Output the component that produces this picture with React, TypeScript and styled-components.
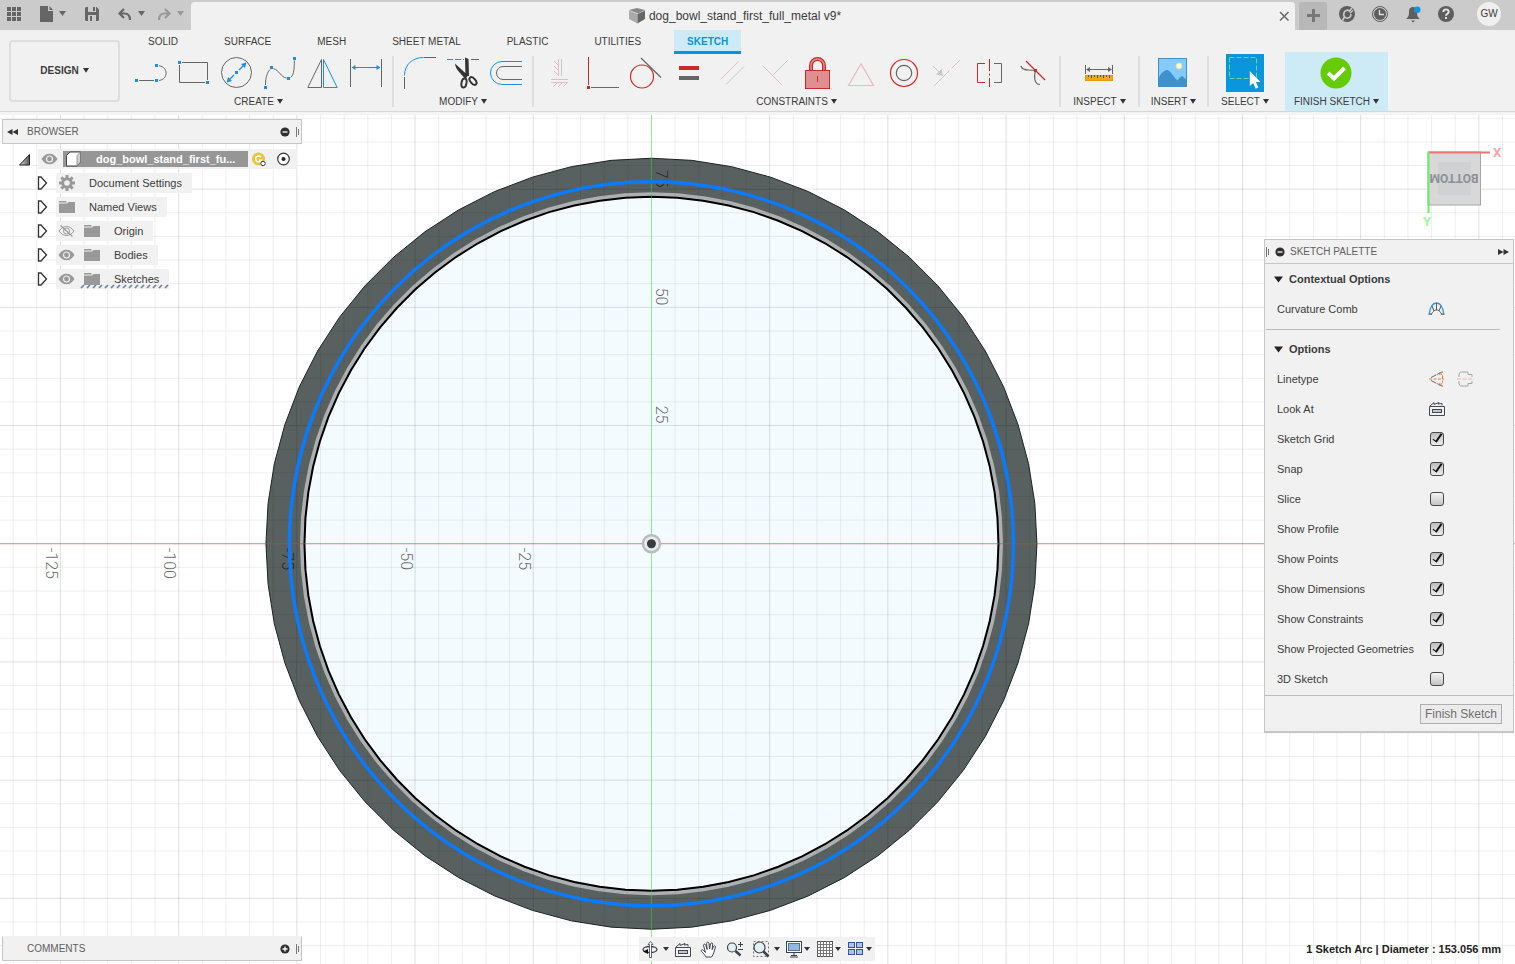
import React, { ReactNode } from "react";
import styled, { createGlobalStyle, css } from "styled-components";

const GlobalStyle = createGlobalStyle`
  *, *::before, *::after { box-sizing: border-box; }
  body {
    margin: 0;
    background: #fff;
    color: #3c3c3c;
    font: 11px/16px "Liberation Sans", Arial, sans-serif;
  }
  button { font: inherit; color: inherit; background: none; border: 0; padding: 0; margin: 0; cursor: pointer; }
  svg { display: block; flex: none; }
  ul { list-style: none; margin: 0; padding: 0; }
  h1, h2, h3 { margin: 0; font: inherit; }
`;

const capsFont = `10px/16px "Liberation Sans", Arial, sans-serif`;
const BLUE = "#1a8fe3";
const GRAY = "#666";
const RED = "#cc2a2a";
const PINK = "#e8bcbc";
const PALE = "#c8c8c8";
const panelBg = "#f1f1f1";

/* ---------- shared drawing helpers ---------- */

type ArtProps = { x: number; y: number; w: number; h: number; children: ReactNode };
const Art = ({ x, y, w, h, children }: ArtProps) => (
  <svg width={w} height={h} viewBox={`${x} ${y} ${w} ${h}`} fill="none" aria-hidden="true">
    {children}
  </svg>
);

const Caret = ({ color = "#333" }: { color?: string }) => (
  <svg width="6" height="6" viewBox="0 0 6 6" aria-hidden="true">
    <path d="M0 0h6L3 4.800z" fill={color} />
  </svg>
);

const Node = ({ x, y, c = BLUE }: { x: number; y: number; c?: string }) => (
  <rect x={x - 1.5} y={y - 1.5} width="3" height="3" fill={c} />
);

/* ---------- title bar ---------- */

const Page = styled.div`
  display: flex;
  flex-direction: column;
  min-height: 100vh;
`;

const TitleBar = styled.header`
  display: flex;
  height: 30px;
  background: #cbcbcb;
`;

const QuickBar = styled.div`
  display: flex;
  gap: 6px;
`;

const DocumentTab = styled.div`
  flex: 1;
  display: flex;
  align-items: center;
  margin-top: 2px;
  padding: 0 2px 0 4px;
  background: ${panelBg};
  border-radius: 4px 4px 0 0;
`;

const DocumentTitle = styled.h1`
  flex: 1;
  display: flex;
  align-items: center;
  justify-content: center;
  gap: 4px;
  font-size: 12px;
`;

const AddTab = styled.button`
  margin: 2px 4px 0 4px;
  background: #b8b8b8;
  border-radius: 3px 3px 0 0;
`;

const Avatar = styled.button`
  display: grid;
  place-items: center;
  width: 24px;
  height: 24px;
  margin: 2px 14px;
  border-radius: 50%;
  background: #efefef;
  font: ${capsFont};
`;

/* ---------- ribbon ---------- */

const Ribbon = styled.div`
  display: flex;
  background: ${panelBg};
  border-bottom: 3px solid #f4f4f4;
`;

const RibbonInner = styled.div`
  flex: 1;
  display: flex;
  border-bottom: 1px solid #d6d6d6;
`;

const Workspace = styled.button`
  display: flex;
  align-items: center;
  justify-content: center;
  gap: 4px;
  width: 111px;
  margin: 10px 5px 9px 9px;
  border: 2px solid #dedede;
  border-radius: 4px;
  font: bold ${capsFont};
`;

const RibbonBody = styled.div`
  flex: 1;
`;

const Tabs = styled.nav`
  display: flex;
  gap: 20px;
  height: 22px;
  padding-left: 10px;
`;

const Tab = styled.button<{ $active?: boolean }>`
  height: 24px;
  padding: 0 13px 1px;
  font: ${capsFont};
  ${(p) =>
    p.$active &&
    css`
      padding: 2px 13px 0;
      background: #cdeaf7;
      border-bottom: 3px solid #0696d7;
      color: #0696d7;
      font-weight: bold;
    `}
`;

const Tools = styled.div`
  display: flex;
`;

const Divider = styled.span`
  width: 2px;
  margin: 4px 0;
  background: #dedede;
`;

const Group = styled.section<{ $width?: number; $accent?: boolean }>`
  width: ${(p) => (p.$width ? `${p.$width}px` : "auto")};
  padding: ${(p) => (p.$width ? "1px 0 0" : "1px 8px 0")};
  background: ${(p) => (p.$accent ? "#cdeaf7" : "none")};
  margin-left: ${(p) => (p.$accent ? "4px" : "0")};
`;

const IconRow = styled.div`
  display: flex;
  align-items: center;
  justify-content: center;
  gap: 7px;
  height: 40px;
`;

const GroupLabel = styled.button`
  display: flex;
  align-items: center;
  justify-content: center;
  gap: 3px;
  width: 100%;
  height: 18px;
  font: ${capsFont};
`;

type Tool = { name: string; x: number; art: ReactNode; w?: number; y?: number; h?: number };

const createTools: Tool[] = [
  {
    name: "Line",
    x: 133,
    art: (
      <>
        <path d="M139 80.5h15M159 65.7c9.500 1.500 9.500 13.500 0 14.800" stroke={GRAY} />
        <Node x={136.5} y={80.5} /><Node x={156.5} y={80.5} /><Node x={156.5} y={65.5} />
      </>
    ),
  },
  {
    name: "Rectangle",
    x: 176,
    art: (
      <>
        <path d="M182 62.5h25.500V80M205 82.5h-25.500V65" stroke={GRAY} />
        <Node x={179.5} y={62.5} /><Node x={207.5} y={82.5} />
      </>
    ),
  },
  {
    name: "Circle",
    x: 219,
    art: (
      <>
        <circle cx="236.500" cy="72.500" r="15" stroke={GRAY} />
        <path d="M239 70l5-5M234 75l-5 5" stroke={BLUE} strokeWidth="1.300" />
        <path d="M246.500 62.500l-1.500 5.500-4-4zM226.500 82.500l1.500-5.500 4 4z" fill={BLUE} />
        <Node x={236.5} y={72.5} />
      </>
    ),
  },
  {
    name: "Spline",
    x: 262,
    art: (
      <>
        <path d="M265.500 85c0-8 2-13 4.500-15.500M273.500 68.500c6 2 7 8.500 13 9.500M290.500 77.500c4-3 3.500-10 4-17" stroke={GRAY} />
        <Node x={265.5} y={87.5} /><Node x={271.5} y={67.5} /><Node x={288.5} y={78.5} /><Node x={294.5} y={58.5} />
      </>
    ),
  },
  {
    name: "Mirror",
    x: 305,
    art: (
      <>
        <path d="M307.800 87.500h13.700V59.500z" stroke={GRAY} />
        <path d="M337.200 87.500h-13.700V59.500z" stroke={BLUE} />
      </>
    ),
  },
  {
    name: "Sketch Dimension",
    x: 348,
    art: (
      <>
        <path d="M350.500 59v28M381.500 59v28" stroke={GRAY} />
        <path d="M352 67.500h28" stroke={BLUE} />
        <path d="M351.500 67.500l4-2.500v5zM380.500 67.500l-4-2.500v5z" fill={BLUE} />
      </>
    ),
  },
];

const modifyTools: Tool[] = [
  {
    name: "Fillet",
    x: 402,
    art: (
      <>
        <path d="M404.500 75.500c0-11 8-18 19-18" stroke={BLUE} />
        <path d="M424 57.500h12M404.500 77v12" stroke={GRAY} />
      </>
    ),
  },
  {
    name: "Trim",
    x: 445,
    art: (
      <>
        <path d="M447 59.500h17" stroke={BLUE} strokeDasharray="6 2" />
        <path d="M471 59.500h8" stroke={GRAY} />
        <path d="M465 57.500l3.500 1.500.5 17h-3.500zM455 63.500l13 12-2.500 3.500c-4-5-10-9-10.500-15.500z" fill="#333" />
        <ellipse cx="464" cy="83" rx="2.500" ry="4.500" transform="rotate(10 464 83)" stroke="#333" strokeWidth="2" />
        <ellipse cx="473" cy="81" rx="2.500" ry="4.500" transform="rotate(-40 473 81)" stroke="#333" strokeWidth="2" />
      </>
    ),
  },
  {
    name: "Offset",
    x: 488,
    art: (
      <>
        <path d="M522 61.500h-20a11.500 11.500 0 0 0 0 23h20" stroke={BLUE} />
        <path d="M522 66.500h-19a6.500 6.500 0 0 0 0 13h19" stroke={GRAY} />
      </>
    ),
  },
];

const constraintTools: Tool[] = [
  {
    name: "Horizontal/Vertical",
    x: 542,
    art: (
      <>
        <path d="M561.500 59v17M551 79.500h17" stroke={PALE} />
        <path d="M558.500 59v17M558 65l-4-4M558 70l-4-4M558 75l-4-4M551 82.500h17M557 83l-4 4M562 83l-4 4M567 83l-4 4" stroke={PINK} />
      </>
    ),
  },
  {
    name: "Coincident",
    x: 585,
    art: (
      <>
        <path d="M588.500 57v28" stroke={RED} />
        <path d="M591 87.500h28" stroke={GRAY} />
        <Node x={588.5} y={87.5} c={RED} />
      </>
    ),
  },
  {
    name: "Tangent",
    x: 628,
    art: (
      <>
        <circle cx="642" cy="76.500" r="11.500" stroke={RED} strokeWidth="1.200" />
        <path d="M641 58l20 19.500" stroke={GRAY} strokeWidth="1.200" />
      </>
    ),
  },
  {
    name: "Equal",
    x: 671,
    art: (
      <>
        <path d="M679 66h20v4h-20z" fill={RED} />
        <path d="M679 76h20v4h-20z" fill={GRAY} />
      </>
    ),
  },
  {
    name: "Parallel",
    x: 714,
    art: (
      <>
        <path d="M720.500 79.500l18-18" stroke={PINK} />
        <path d="M726 84.500l18-18" stroke={PALE} />
      </>
    ),
  },
  {
    name: "Perpendicular",
    x: 757,
    art: (
      <>
        <path d="M762.500 65.500l20 20" stroke={PINK} />
        <path d="M773 75l14.500-14.500" stroke={PALE} />
      </>
    ),
  },
  {
    name: "Fix/Unfix",
    x: 800,
    art: (
      <>
        <path d="M811 70v-4.500a6.500 6.500 0 0 1 13 0V70" stroke={RED} strokeWidth="4" />
        <path d="M811 70v-4.500a6.500 6.500 0 0 1 13 0V70" stroke="#df8c8c" strokeWidth="1.500" />
        <rect x="805.500" y="70.500" width="24" height="18" fill="#df8f8f" stroke={RED} />
        <path d="M817.500 76v6" stroke={RED} />
      </>
    ),
  },
  {
    name: "Midpoint",
    x: 843,
    art: <path d="M861 63.800l-12.500 21.700h25z" stroke={PINK} strokeWidth="1.200" />,
  },
  {
    name: "Concentric",
    x: 886,
    art: (
      <>
        <circle cx="904" cy="73" r="13.500" stroke={RED} strokeWidth="1.200" />
        <circle cx="904" cy="73" r="7.700" stroke={GRAY} strokeWidth="1.200" />
      </>
    ),
  },
  {
    name: "Collinear",
    x: 929,
    art: (
      <>
        <path d="M934 86l15.500-15.500M933 66l6 6" stroke={PALE} />
        <path d="M951.500 68.500l8.500-8.500" stroke={PINK} />
        <path d="M943 76l-1.500-7-5.500 5.500z" fill={PALE} />
      </>
    ),
  },
  {
    name: "Symmetry",
    x: 972,
    art: (
      <>
        <path d="M985 63.500h-7.500v19h7.500" stroke={RED} />
        <path d="M989.500 59v12M989.500 73.500v2M989.500 78v9" stroke={RED} />
        <path d="M994 63.500h7.500v19h-7.500" stroke={GRAY} />
      </>
    ),
  },
  {
    name: "Curvature",
    x: 1015,
    art: (
      <>
        <path d="M1020.800 66c1.200 3.500 3.700 4 8 4l6.700.5c-2 7-1 14 4.500 14" stroke={GRAY} strokeWidth="1.200" />
        <path d="M1026 61l19 19" stroke={RED} strokeWidth="1.200" />
        <Node x={1035.5} y={70.5} c={RED} />
      </>
    ),
  },
];

const inspectTools: Tool[] = [
  {
    name: "Measure",
    x: 1082,
    w: 35,
    art: (
      <>
        <path d="M1085.500 65v9M1112.500 65v9M1087 69.500h24" stroke={GRAY} />
        <path d="M1086 69.500l4-2.500v5zM1112 69.500l-4-2.500v5z" fill={GRAY} />
        <rect x="1085.500" y="75.500" width="27" height="5" fill="#f5a80b" stroke="#e59a00" />
        <path d="M1088.500 75v2M1091.500 75v3M1094.500 75v2M1097.500 75v3M1100.500 75v2M1103.500 75v3M1106.500 75v2M1109.500 75v3" stroke="#555" />
      </>
    ),
  },
];

const insertTools: Tool[] = [
  {
    name: "Insert image",
    x: 1158,
    w: 31,
    art: (
      <>
        <rect x="1158.500" y="58.500" width="28" height="28" fill="#84caff" stroke="#3a94d3" />
        <path d="M1159 77c3-5 6-7 8.500-7s7.500 9 10 10.500c2-3 4-5 5.500-4l3 3V87h-27z" fill="#3e92cc" />
        <circle cx="1179" cy="66" r="3" fill="#fdfad0" stroke="#d9dfae" />
      </>
    ),
  },
];

const selectTools: Tool[] = [
  {
    name: "Select",
    x: 1226,
    y: 54,
    w: 38,
    h: 38,
    art: (
      <>
        <rect x="1226" y="54" width="38" height="38" fill="#0a96dc" />
        <rect x="1229.500" y="57.500" width="27" height="21" stroke="#63d98b" strokeDasharray="5 2" />
        <path d="M1249.800 71v15l3.400-3 2.500 5.700 2.700-1.200-2.500-5.500h4.600z" fill="#fff" />
      </>
    ),
  },
];

const finishTools: Tool[] = [
  {
    name: "Finish",
    x: 1319,
    w: 35,
    art: (
      <>
        <circle cx="1336" cy="73" r="15.500" fill="#65cb05" />
        <path d="M1328 73l6 5.500 10.500-10.500" stroke="#fff" strokeWidth="4" />
      </>
    ),
  },
];

const ToolGroup = ({ label, tools, width, accent }: { label: string; tools: Tool[]; width?: number; accent?: boolean }) => (
  <Group $width={width} $accent={accent}>
    <IconRow>
      {tools.map((t) => (
        <button key={t.name} title={t.name} aria-label={t.name}>
          <Art x={t.x} y={t.y ?? 55} w={t.w ?? 36} h={t.h ?? 36}>{t.art}</Art>
        </button>
      ))}
    </IconRow>
    <GroupLabel>{label}<Caret /></GroupLabel>
  </Group>
);

/* ---------- model canvas ---------- */

const Canvas = styled.main`
  position: relative;
  flex: 1;
  display: flex;
  flex-direction: column;
  justify-content: space-between;
  padding: 4px 1px 3px 2px;
`;

const Scene = styled.svg`
  position: absolute;
  inset: 0;
  width: 100%;
  height: 100%;
`;

const polygon = (radius: number, sides: number) =>
  Array.from({ length: sides }, (_, i) => {
    const a = (i * 2 * Math.PI) / sides;
    return `${(radius * Math.cos(a)).toFixed(1)},${(radius * Math.sin(a)).toFixed(1)}`;
  }).join(" ");

const STEP = 23.64;
const gridLines = Array.from({ length: 121 }, (_, i) => i - 60).filter((n) => n !== 0);

const ScaleLabel = ({ x, y, children }: { x: number; y: number; children: string }) => (
  <text transform={`translate(${x} ${y}) rotate(90)`} fontFamily="Roboto, sans-serif" fontWeight="300" fontSize="16" fill="#000" fillOpacity="0.6">
    {children}
  </text>
);

const Model = () => (
  <Scene aria-label="Sketch canvas">
    <svg x="43%" y="50.5%" overflow="visible">
      <polygon points={polygon(385.5, 60)} fill="#596060" stroke="#1c2424" />
      <polygon points={polygon(349.5, 84)} fill="none" stroke="#adb0b0" strokeWidth="4" />
      <polygon points={polygon(347, 84)} fill="#f3fbff" stroke="#000" strokeWidth="2" />
      {gridLines.map((n) => (
        <path
          key={n}
          d={`M${n * STEP} -1500V1500M-1500 ${n * STEP}H1500`}
          stroke="#000"
          strokeOpacity={n % 5 === 0 ? 0.12 : 0.065}
          fill="none"
        />
      ))}
      <path d="M-1500 0H1500" stroke="#d04040" strokeOpacity="0.65" />
      <path d="M0 -1500V1500" stroke="#35d045" strokeOpacity="0.55" />
      <ScaleLabel x={-605} y={4}>-125</ScaleLabel>
      <ScaleLabel x={-487} y={4}>-100</ScaleLabel>
      <ScaleLabel x={-369} y={4}>-75</ScaleLabel>
      <ScaleLabel x={-250} y={4}>-50</ScaleLabel>
      <ScaleLabel x={-132} y={4}>-25</ScaleLabel>
      <ScaleLabel x={5} y={-374}>75</ScaleLabel>
      <ScaleLabel x={5} y={-256}>50</ScaleLabel>
      <ScaleLabel x={5} y={-138}>25</ScaleLabel>
      <circle r="362" fill="none" stroke="#0a7bff" strokeWidth="3.500" />
      <circle r="8.500" fill="#e8ecee" stroke="#b9bcbd" strokeWidth="2.500" />
      <circle r="4.500" fill="#3a3d3e" />
    </svg>
  </Scene>
);

/* ---------- browser ---------- */

const CanvasTop = styled.div`
  position: relative;
  display: flex;
  justify-content: space-between;
  align-items: flex-start;
`;

const PanelBar = styled.div<{ $docked?: boolean }>`
  display: flex;
  align-items: center;
  width: 300px;
  height: 25px;
  padding: 0 1px 0 4px;
  background: ${panelBg};
  border: 1px solid #c6c6c6;
  border-top-color: ${(p) => (p.$docked ? panelBg : "#c6c6c6")};
  color: #606060;
`;

const PanelName = styled.h2<{ $indent?: boolean }>`
  flex: 1;
  font: ${capsFont};
  padding-left: ${(p) => (p.$indent ? "20px" : "9px")};
`;

const BarButton = styled.button`
  margin-right: 6px;
`;

const Tree = styled.ul`
  padding-top: 3px;
`;

const Branch = styled.li<{ $root?: boolean }>`
  display: flex;
  align-items: center;
  gap: ${(p) => (p.$root ? "7px" : "8px")};
  height: 24px;
  padding-left: ${(p) => (p.$root ? "16px" : "34px")};
`;

const Leaf = styled.span`
  position: relative;
  display: flex;
  align-items: center;
  height: 20px;
  padding: 0 10px 0 2px;
  gap: 8px;
  background: ${panelBg};
`;

const LeafName = styled.span`
  padding-left: 5px;
`;

const RootLeaf = styled.span`
  display: flex;
  align-items: center;
  width: 259px;
  height: 20px;
  padding-left: 3px;
  gap: 4px;
  background: ${panelBg};
`;

const RootName = styled.span`
  display: flex;
  align-items: center;
  gap: 13px;
  width: 185px;
  height: 16px;
  padding-left: 2px;
  margin-left: 1px;
  background: #969696;
  color: #fff;
  font-weight: bold;
`;

const Underline = styled.svg`
  position: absolute;
  left: 24px;
  bottom: 0;
`;

const Rewind = ({ flip }: { flip?: boolean }) => (
  <svg width="11" height="8" viewBox="0 0 11 8" aria-hidden="true">
    <path d={flip ? "M0 1l5.500 3L0 7zM5.500 1L11 4 5.500 7z" : "M11 1L5.500 4 11 7zM5.500 1L0 4l5.500 3z"} fill="#333" />
  </svg>
);

const Round = ({ plus }: { plus?: boolean }) => (
  <svg width="10" height="10" viewBox="0 0 10 10" aria-hidden="true">
    <circle cx="5" cy="5" r="4.600" fill="#2f2f2f" />
    <path d={plus ? "M2.500 5h5M5 2.500v5" : "M2.500 5h5"} stroke="#fff" strokeWidth="1.300" />
  </svg>
);

const Grip = () => (
  <svg width="4" height="12" viewBox="0 0 4 12" aria-hidden="true">
    <path d="M.5 1v10M2.500 3v6" stroke="#777" />
  </svg>
);

const Eye = ({ off }: { off?: boolean }) => (
  <svg width="17" height="14" viewBox="0 0 17 14" fill="none" aria-hidden="true">
    {off ? (
      <>
        <path d="M1 7c4-6 11-6 15 0-4 6-11 6-15 0z" stroke="#999" />
        <circle cx="8.500" cy="7" r="3" stroke="#999" />
        <path d="M2.500 1.500l12 11" stroke="#999" strokeWidth="1.200" />
      </>
    ) : (
      <>
        <path d="M.5 7c4-7 12-7 16 0-4 7-12 7-16 0z" fill="#999" />
        <circle cx="8.500" cy="7" r="3" fill="#999" stroke="#f1f1f1" strokeWidth="1.200" />
      </>
    )}
  </svg>
);

const Folder = () => (
  <svg width="18" height="16" viewBox="0 0 18 16" aria-hidden="true">
    <path d="M1 2h7l1 1.500H1zM1 4.500h8L10.500 3H17v11H1z" fill="#999" />
  </svg>
);

const Gear = () => (
  <svg width="18" height="18" viewBox="-9 -9 18 18" fill="none" aria-hidden="true">
    <circle r="4.300" stroke="#999" strokeWidth="3" />
    {[0, 45, 90, 135].map((a) => (
      <path key={a} d="M0 -8v3M0 5v3" stroke="#999" strokeWidth="3" transform={`rotate(${a})`} />
    ))}
  </svg>
);

const Expander = () => (
  <svg width="12" height="14" viewBox="0 0 12 14" aria-hidden="true">
    <path d="M2.500 1h2.500l5.500 6L5 13H2.500z" fill="#fff" stroke="#333" strokeWidth="1.300" />
  </svg>
);

type Item = { name: string; icon: "gear" | "folder"; eye?: "on" | "off"; marked?: boolean };
const items: Item[] = [
  { name: "Document Settings", icon: "gear" },
  { name: "Named Views", icon: "folder" },
  { name: "Origin", icon: "folder", eye: "off" },
  { name: "Bodies", icon: "folder", eye: "on" },
  { name: "Sketches", icon: "folder", eye: "on", marked: true },
];

const Browser = () => (
  <aside>
    <PanelBar>
      <button aria-label="Collapse browser"><Rewind /></button>
      <PanelName>BROWSER</PanelName>
      <BarButton aria-label="Hide browser"><Round /></BarButton>
      <Grip />
    </PanelBar>
    <Tree>
      <Branch $root>
        <button aria-label="Collapse document">
          <svg width="13" height="13" viewBox="0 0 13 13">
            <defs>
              <linearGradient id="fold" x1="0" x2="1"><stop offset="0" stopColor="#ddd" /><stop offset="1" stopColor="#555" /></linearGradient>
            </defs>
            <path d="M1.500 12h10V1.500z" fill="url(#fold)" stroke="#222" />
          </svg>
        </button>
        <RootLeaf>
          <Eye />
          <RootName>
            <svg width="18" height="16" viewBox="0 0 18 16" aria-hidden="true">
              <path d="M1.500 4.500L5 1h10.500v10L12 15H1.500z" fill="#fff" stroke="#444" strokeLinejoin="round" />
              <path d="M12 15V4.500L15.500 1v10z" fill="#ccd1dc" stroke="#777" strokeWidth=".7" />
            </svg>
            <span>dog_bowl_stand_first_fu...</span>
          </RootName>
          <svg width="15" height="15" viewBox="0 0 15 15" aria-hidden="true">
            <circle cx="6.500" cy="7" r="6.500" fill="#e5c63f" />
            <path d="M9 5a3 3 0 1 0 .3 3.300H7" stroke="#fff" strokeWidth="1.500" fill="none" />
            <circle cx="11" cy="11.500" r="2.200" fill="#fff" stroke="#444" />
          </svg>
          <svg width="26" height="14" viewBox="0 0 26 14" aria-hidden="true">
            <circle cx="12.500" cy="7" r="5.800" fill="#fff" stroke="#333" strokeWidth="1.200" />
            <circle cx="12.500" cy="7" r="2" fill="#222" />
          </svg>
        </RootLeaf>
      </Branch>
      {items.map((it) => (
        <Branch key={it.name}>
          <button aria-label={`Expand ${it.name}`}><Expander /></button>
          <Leaf>
            {it.eye && <Eye off={it.eye === "off"} />}
            {it.icon === "gear" ? <Gear /> : <Folder />}
            <LeafName>{it.name}</LeafName>
            {it.marked && (
              <Underline width="90" height="5" viewBox="0 0 90 5" aria-hidden="true">
                {Array.from({ length: 15 }, (_, i) => (
                  <path key={i} d={`M${i * 6 + 1} 4l3-3`} stroke="#6d84a8" strokeWidth="1.700" />
                ))}
              </Underline>
            )}
          </Leaf>
        </Branch>
      ))}
    </Tree>
  </aside>
);

/* ---------- view cube and palette ---------- */

const RightColumn = styled.div`
  display: flex;
  flex-direction: column;
  align-items: flex-end;
  gap: 9px;
  padding-top: 21px;
`;

const ViewCube = () => (
  <svg width="95" height="90" viewBox="1419 140 95 90" role="img" aria-label="View cube, bottom">
    <rect x="1428" y="152" width="52.500" height="53" fill="#d8d8d8" stroke="#a6a6a6" />
    <rect x="1438" y="162" width="33" height="33" fill="#cfd1d3" />
    <path d="M1428 152.500h62" stroke="#f07676" strokeWidth="2" />
    <path d="M1428.500 152v61" stroke="#6aee6a" strokeWidth="2" />
    <text transform="translate(1454 174) rotate(180)" textAnchor="middle" fontFamily="Roboto, sans-serif" fontSize="12" fontWeight="bold" fill="#8d9196">BOTTOM</text>
    <text x="1493" y="157" fontFamily="Roboto, sans-serif" fontSize="13" fontWeight="bold" fill="#f9a3a3">X</text>
    <text x="1423" y="226" fontFamily="Roboto, sans-serif" fontSize="13" fontWeight="bold" fill="#a3f5a3">Y</text>
  </svg>
);

const Palette = styled.section`
  width: 250px;
  background: ${panelBg};
  border: 1px solid #c6c6c6;
  border-bottom-width: 2px;
`;

const PaletteHeader = styled.div`
  display: flex;
  align-items: center;
  gap: 5px;
  height: 24px;
  padding: 0 4px 0 1px;
  border-bottom: 1px solid #c6c6c6;
  color: #606060;
`;

const PaletteTitle = styled.h2`
  flex: 1;
  font: ${capsFont};
`;

const Section = styled.div`
  padding-bottom: 5px;
  & + & {
    padding-top: 4px;
    padding-bottom: 0;
    border-top: 1px solid #bcbcbc;
    margin: 0 13px 0 1px;
  }
`;

const SectionTitle = styled.button<{ $inset?: boolean }>`
  display: flex;
  align-items: center;
  gap: 6px;
  width: 100%;
  height: 30px;
  padding-left: ${(p) => (p.$inset ? "8px" : "9px")};
  font-weight: bold;
`;

const Row = styled.div<{ $inset?: boolean }>`
  display: flex;
  align-items: center;
  height: 30px;
  padding-left: ${(p) => (p.$inset ? "11px" : "12px")};
`;

const RowLabel = styled.label`
  width: 151px;
  white-space: nowrap;
`;

const RowActions = styled.span`
  display: flex;
  gap: 11px;
`;

const Check = styled.input`
  appearance: none;
  width: 14px;
  height: 14px;
  margin: 0 0 0 2px;
  border: 1px solid #484848;
  border-radius: 3px;
  background: linear-gradient(#f4f4f4, #c4c4c4);
  &:checked {
    background: linear-gradient(#bdbdbd, #ededed);
  }
  &:checked::after {
    content: "";
    display: block;
    width: 5px;
    height: 10px;
    margin: -1px 0 0 4px;
    border: solid #111;
    border-width: 0 2px 1px 0;
    transform: rotate(35deg);
  }
`;

const PaletteFooter = styled.div`
  display: flex;
  justify-content: flex-end;
  padding: 8px 11px 7px;
  margin-top: 1px;
  border-top: 1px solid #bcbcbc;
`;

const FinishButton = styled.button`
  height: 20px;
  padding: 0 4px;
  border: 1px solid #aeaeae;
  background: #ebebeb;
  color: #707070;
  font-size: 12px;
`;

const LookAtShape = ({ x, y }: { x: number; y: number }) => (
  <g transform={`translate(${x} ${y})`}>
    <path d="M.5 5.500h15v9H.500zM1 5l4-3.500v2l5-2-1 1.500 4-.5v2" stroke="#434a55" />
    <rect x="3.500" y="8.500" width="9" height="3" fill="#bcc4d0" stroke="#434a55" />
  </g>
);

const checks: [string, boolean][] = [
  ["Sketch Grid", true],
  ["Snap", true],
  ["Slice", false],
  ["Show Profile", true],
  ["Show Points", true],
  ["Show Dimensions", true],
  ["Show Constraints", true],
  ["Show Projected Geometries", true],
  ["3D Sketch", false],
];

const BigCaret = () => (
  <svg width="9" height="7" viewBox="0 0 9 7" aria-hidden="true"><path d="M0 .5h9L4.500 6.500z" fill="#222" /></svg>
);

const SketchPalette = () => (
  <Palette>
    <PaletteHeader>
      <Grip />
      <button aria-label="Hide palette"><Round /></button>
      <PaletteTitle>SKETCH PALETTE</PaletteTitle>
      <button aria-label="Collapse palette"><Rewind flip /></button>
    </PaletteHeader>
    <Section>
      <SectionTitle><BigCaret />Contextual Options</SectionTitle>
      <Row>
        <RowLabel as="span">Curvature Comb</RowLabel>
        <button aria-label="Curvature comb">
          <Art x={0} y={0} w={17} h={16}>
            <path d="M1 14C2 6 5 2 8.500 2S15 6 16 14" stroke="#3a97dc" strokeWidth="1.400" />
            <path d="M3 14c2-4 3.500-5 5.500-5s3.500 1 5.500 5M8.500 2v7M4 5l2 5M13 5l-2 5M1 13h3M13 13h3" stroke="#555" />
          </Art>
        </button>
      </Row>
    </Section>
    <Section>
      <SectionTitle $inset><BigCaret />Options</SectionTitle>
      <Row $inset>
        <RowLabel as="span">Linetype</RowLabel>
        <RowActions>
          <button aria-label="Construction">
            <Art x={0} y={0} w={18} h={16}>
              <path d="M3 6.500L15 .500M3 9.500l12 6" stroke="#666" strokeDasharray="6 1" />
              <path d="M1 8h15M14.500 5v6" stroke="#e07a3a" strokeDasharray="3 1.500" />
              <path d="M11 1l4 4M15 1l-4 3M11 15l4-4M15 15l-4-3" stroke="#e59a6a" />
            </Art>
          </button>
          <button aria-label="Centerline">
            <Art x={0} y={0} w={17} h={16}>
              <path d="M2 6V3l1.500-2H11v2.500h4V6M2 10v3l1.500 2H11v-2.500h4V10" stroke="#a5a5a5" />
              <path d="M0 8h17" stroke="#f0bd94" strokeDasharray="4 1.500" />
            </Art>
          </button>
        </RowActions>
      </Row>
      <Row $inset>
        <RowLabel as="span">Look At</RowLabel>
        <button aria-label="Look at">
          <Art x={0} y={0} w={18} h={16}><LookAtShape x={1} y={0} /></Art>
        </button>
      </Row>
      {checks.map(([name, on]) => (
        <Row key={name} $inset>
          <RowLabel htmlFor={name}>{name}</RowLabel>
          <Check type="checkbox" id={name} defaultChecked={on} />
        </Row>
      ))}
    </Section>
    <PaletteFooter>
      <FinishButton>Finish Sketch</FinishButton>
    </PaletteFooter>
  </Palette>
);

/* ---------- bottom bar ---------- */

const BottomBar = styled.footer`
  position: relative;
  display: grid;
  grid-template-columns: 1fr auto 1fr;
  align-items: center;
  padding-right: 2px;
`;

const NavBar = styled.div`
  display: flex;
  height: 24px;
  background: ${panelBg};
`;

const Status = styled.p`
  margin: 0;
  padding-right: 11px;
  text-align: right;
  font-weight: bold;
  color: #222;
`;

const navCaret = (x: number) => <path d={`M${x} 947h6l-3 4z`} fill="#333" />;
const INK = "#39424f";

const navTools: { name: string; x: number; w: number; art: ReactNode }[] = [
  {
    name: "Orbit",
    x: 639,
    w: 31,
    art: (
      <>
        <ellipse cx="650" cy="949.500" rx="7" ry="3" stroke={INK} strokeWidth="1.300" />
        <path d="M649.500 957.500v-13H648l2.500-3 2.500 3h-1.500v13z" fill="#fff" stroke={INK} strokeWidth=".8" />
        <path d="M643 951.500l5-2.500v5z" fill="#111" />
        {navCaret(663)}
      </>
    ),
  },
  { name: "Look At", x: 670, w: 26, art: <LookAtShape x={675} y={942} /> },
  {
    name: "Pan",
    x: 696,
    w: 26,
    art: (
      <path
        d="M706 957c-1-2-3-4-4.500-5.500-.8-1.500.8-2.500 2-1l2 2-2-7c0-1.800 2-1.800 2.400 0l1.200 4-.5-6c0-1.800 2.200-1.800 2.400 0l.5 5.500 1-5c.5-1.600 2.300-1.300 2.200.2l-.6 5.500 1.400-3.200c.8-1.300 2.300-.8 1.900.7l-1.500 5c-.4 2-1.400 3.300-2.400 4.800z"
        fill="#fff"
        stroke={INK}
      />
    ),
  },
  {
    name: "Zoom",
    x: 722,
    w: 26,
    art: (
      <>
        <circle cx="732" cy="947.500" r="4.500" fill="#e4f0f4" stroke={INK} strokeWidth="1.200" />
        <path d="M735.500 951l5 4.500" stroke={INK} strokeWidth="2.500" />
        <path d="M738 944.500h5M740.500 942v5M738 949.500h5" stroke={INK} />
      </>
    ),
  },
  {
    name: "Fit",
    x: 748,
    w: 34,
    art: (
      <>
        <rect x="753.500" y="941.500" width="15" height="15" stroke="#777" strokeDasharray="2 2" />
        <circle cx="759.500" cy="947.500" r="5.500" fill="#e4f0f4" stroke={INK} strokeWidth="1.200" />
        <path d="M763.500 951.500l5 5" stroke={INK} strokeWidth="2.500" />
        {navCaret(774)}
      </>
    ),
  },
  {
    name: "Display Settings",
    x: 782,
    w: 32,
    art: (
      <>
        <rect x="786.500" y="941.500" width="15" height="11" fill="#fff" stroke={INK} />
        <rect x="788.500" y="943.500" width="11" height="7" fill="#93b8e0" stroke="#4d74a5" />
        <path d="M791 955.500h6M790 957h8M794 953v3" stroke={INK} />
        {navCaret(804)}
      </>
    ),
  },
  {
    name: "Grid and Snaps",
    x: 814,
    w: 31,
    art: (
      <>
        <rect x="817.500" y="941.500" width="15" height="15" fill="#fff" stroke="#555" />
        <path d="M820.500 941v16M823.500 941v16M826.500 941v16M829.500 941v16M817 944.500h16M817 947.500h16M817 950.500h16M817 953.500h16" stroke="#777" />
        {navCaret(835)}
      </>
    ),
  },
  {
    name: "Viewports",
    x: 845,
    w: 30,
    art: (
      <>
        {[848.5, 856.5].map((x) =>
          [942.5, 949.5].map((y) => <rect key={`${x}-${y}`} x={x} y={y} width="6" height="5" fill="#a9c6ea" stroke="#34568a" />)
        )}
        {navCaret(866)}
      </>
    ),
  },
];

/* ---------- app ---------- */

export default function App() {
  return (
    <Page>
      <GlobalStyle />
      <TitleBar>
        <QuickBar>
          <button aria-label="Data panel">
            <Art x={0} y={0} w={28} h={30}>
              {[7, 12, 17].map((x) => [7, 12, 17].map((y) => <rect key={`${x}-${y}`} x={x} y={y} width="4" height="4" fill="#666" />))}
            </Art>
          </button>
          <button aria-label="File">
            <Art x={34} y={0} w={38} h={30}>
              <path d="M40 6h8v5h5v11H40zM49.500 6l3.500 4h-3.500z" fill="#666" />
              <path d="M59 11h7l-3.500 5z" fill="#666" />
            </Art>
          </button>
          <button aria-label="Save">
            <Art x={78} y={0} w={28} h={30}>
              <path d="M86 7h10.500L99 9.500V20l-1 1H86l-1-1V8z" fill="#666" />
              <path d="M88 7h8v5h-8zM88 15h8v6h-8z" fill="#cbcbcb" />
              <path d="M93 7h2v4h-2zM90 16h2v5h-2z" fill="#666" />
            </Art>
          </button>
          <button aria-label="Undo">
            <Art x={112} y={0} w={38} h={30}>
              <path d="M119.500 13.500h5c4 0 5.500 2 5.500 6.500M124 9l-4.500 4.500L124 18" stroke="#666" strokeWidth="2.200" />
              <path d="M138 11h7l-3.500 5z" fill="#666" />
            </Art>
          </button>
          <button aria-label="Redo">
            <Art x={156} y={0} w={35} h={30}>
              <path d="M169.500 13.500h-5c-4 0-5.500 2-5.500 6.500M165 9l4.500 4.500L165 18" stroke="#999" strokeWidth="2.200" />
              <path d="M177 11h7l-3.500 5z" fill="#999" />
            </Art>
          </button>
        </QuickBar>
        <DocumentTab>
          <DocumentTitle>
            <Art x={626} y={8} w={16} h={16}>
              <path d="M626 10l8-2 8 2-7 3.500z" fill="#888" />
              <path d="M626 10.500l8.500 3.500v9.500L626 19z" fill="#aaa" />
              <path d="M642 10.500l-7.500 3.500v9.500L642 19z" fill="#666" />
            </Art>
            dog_bowl_stand_first_full_metal v9*
          </DocumentTitle>
          <button aria-label="Close document">
            <Art x={1275} y={7} w={18} h={18}>
              <path d="M1280 12l8.500 8.500M1288.500 12l-8.500 8.500" stroke="#666" strokeWidth="1.500" />
            </Art>
          </button>
        </DocumentTab>
        <AddTab aria-label="New document">
          <Art x={1299} y={2} w={28} h={28}>
            <path d="M1307 15.500h13M1313.500 9v13" stroke="#777" strokeWidth="3" />
          </Art>
        </AddTab>
        <button aria-label="Extensions">
          <Art x={1331} y={0} w={33} h={30}>
            <circle cx="1347" cy="14" r="8" fill="#5e5e5e" />
            <path d="M1342.500 20.500l2-3.500c-2-3.500 0-6.500 3-7l2 1 2.500-3M1350 13l3-2.500" stroke="#cbcbcb" strokeWidth="1.600" />
            <path d="M1344.500 17c1.500 1.500 4.500 1.500 6-.5l.5-2.500" stroke="#cbcbcb" strokeWidth="1.600" />
          </Art>
        </button>
        <button aria-label="Job status">
          <Art x={1364} y={0} w={33} h={30}>
            <circle cx="1380" cy="14" r="7.500" stroke="#5e5e5e" />
            <circle cx="1380" cy="14" r="6" fill="#5e5e5e" />
            <path d="M1379.500 10v4.500h4.500" stroke="#ddd" strokeWidth="1.400" />
          </Art>
        </button>
        <button aria-label="Notifications">
          <Art x={1397} y={0} w={33} h={30}>
            <path d="M1406 19c3-2 3-5 3-8 0-3 2-4 4-4s4 1 4 4c0 3 0 6 3 8zM1411 20.500h4l-2 2z" fill="#5e5e5e" />
            <circle cx="1417.300" cy="9.700" r="3.200" fill="#1294dd" />
          </Art>
        </button>
        <button aria-label="Help">
          <Art x={1430} y={0} w={33} h={30}>
            <circle cx="1446" cy="14" r="8" fill="#5e5e5e" />
            <path d="M1443.300 12c0-3.500 5.400-3.500 5.400-.3 0 2-2.700 2-2.700 4M1446 17v2" stroke="#e6e6e6" strokeWidth="1.900" />
          </Art>
        </button>
        <Avatar aria-label="Account">GW</Avatar>
      </TitleBar>

      <Ribbon>
        <RibbonInner>
          <Workspace>DESIGN<Caret /></Workspace>
          <RibbonBody>
            <Tabs>
              {["SOLID", "SURFACE", "MESH", "SHEET METAL", "PLASTIC", "UTILITIES", "SKETCH"].map((t) => (
                <Tab key={t} $active={t === "SKETCH"}>{t}</Tab>
              ))}
            </Tabs>
            <Tools>
              <ToolGroup label="CREATE" tools={createTools} />
              <Divider />
              <ToolGroup label="MODIFY" tools={modifyTools} />
              <Divider />
              <ToolGroup label="CONSTRAINTS" tools={constraintTools} />
              <Divider />
              <ToolGroup label="INSPECT" tools={inspectTools} width={77} />
              <Divider />
              <ToolGroup label="INSERT" tools={insertTools} width={67} />
              <Divider />
              <ToolGroup label="SELECT" tools={selectTools} width={72} />
              <ToolGroup label="FINISH SKETCH" tools={finishTools} width={103} accent />
            </Tools>
          </RibbonBody>
        </RibbonInner>
      </Ribbon>

      <Canvas>
        <Model />
        <CanvasTop>
          <Browser />
          <RightColumn>
            <ViewCube />
            <SketchPalette />
          </RightColumn>
        </CanvasTop>
        <BottomBar>
          <PanelBar $docked>
            <PanelName $indent>COMMENTS</PanelName>
            <BarButton aria-label="Show comments"><Round plus /></BarButton>
            <Grip />
          </PanelBar>
          <NavBar>
            {navTools.map((t) => (
              <button key={t.name} title={t.name} aria-label={t.name}>
                <Art x={t.x} y={937} w={t.w} h={24}>{t.art}</Art>
              </button>
            ))}
          </NavBar>
          <Status>1 Sketch Arc | Diameter : 153.056 mm</Status>
        </BottomBar>
      </Canvas>
    </Page>
  );
}
